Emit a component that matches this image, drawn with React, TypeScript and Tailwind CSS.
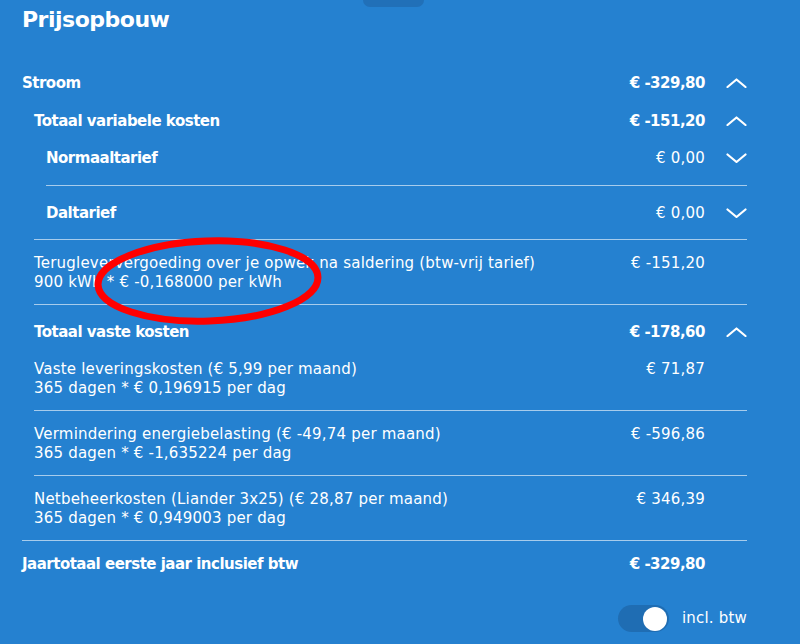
import React from "react"

type Chevron = "up" | "down" | null

function ChevronIcon({ dir }: { dir: Chevron }) {
  if (!dir) return <span className="w-[21px] shrink-0" />
  return (
    <svg width="21" height="10" viewBox="0 0 21 10" className="shrink-0" fill="none" stroke="white" strokeWidth="2.2" strokeLinecap="round" strokeLinejoin="round">
      {dir === "up" ? <polyline points="1.5,9 10.5,1.5 19.5,9" /> : <polyline points="1.5,1.5 10.5,9 19.5,1.5" />}
    </svg>
  )
}

function Amount({ value, chevron, className = "" }: { value: string; chevron: Chevron; className?: string }) {
  return (
    <div className="flex items-center shrink-0">
      <span className={`text-right whitespace-nowrap ${className}`}>{value}</span>
      <span className="ml-[21px] flex items-center">
        <ChevronIcon dir={chevron} />
      </span>
    </div>
  )
}

function Detail({ title, sub, value, last = false }: { title: string; sub: string; value: string; last?: boolean }) {
  return (
    <div className={`flex justify-between items-start pt-[14px] pb-[12px] leading-[19px] ${last ? "" : "border-b border-white/60"}`}>
      <div>
        <div>{title}</div>
        <div>{sub}</div>
      </div>
      <Amount value={value} chevron={null} />
    </div>
  )
}

export default function App() {
  return (
    <div className="relative w-[800px] h-[644px] overflow-hidden bg-[#2581d0] text-white text-[15px] font-['DejaVu_Sans',sans-serif] tracking-[0.2px]">
      <div className="absolute left-[363px] top-0 w-[61px] h-[7px] rounded-b-full bg-[#2170b8]" />

      <div className="pl-[22px] pr-[53px]">
        <h1 className="h-[64px] pt-[6px] text-[22px] leading-[28px] font-bold tracking-[-0.5px]">Prijsopbouw</h1>

        <div className="border-b border-white/60">
          <div className="flex h-[38px] items-center justify-between font-bold tracking-[-0.5px]">
            <span>Stroom</span>
            <Amount value="€ -329,80" chevron="up" />
          </div>

          <div className="pl-[12px]">
            <div className="flex h-[38px] items-center justify-between font-bold tracking-[-0.5px]">
              <span>Totaal variabele kosten</span>
              <Amount value="€ -151,20" chevron="up" />
            </div>

            <div className="pl-[12px] border-b border-white/60">
              <div className="flex justify-between items-center pt-[8px] pb-[17px] leading-[20px] border-b border-white/60">
                <span className="font-semibold tracking-[-0.5px]">Normaaltarief</span>
                <Amount value="€ 0,00" chevron="down" />
              </div>
              <div className="flex justify-between items-center pt-[17px] pb-[16px] leading-[20px]">
                <span className="font-semibold tracking-[-0.5px]">Daltarief</span>
                <Amount value="€ 0,00" chevron="down" />
              </div>
            </div>

            <Detail
              title="Terugleververgoeding over je opwek na saldering (btw-vrij tarief)"
              sub="900 kWh * € -0,168000 per kWh"
              value="€ -151,20"
            />

            <div className="flex justify-between items-center pt-[17px] leading-[20px] font-bold tracking-[-0.5px]">
              <span>Totaal vaste kosten</span>
              <Amount value="€ -178,60" chevron="up" />
            </div>

            <div className="pt-[4px]">
              <Detail title="Vaste leveringskosten (€ 5,99 per maand)" sub="365 dagen * € 0,196915 per dag" value="€ 71,87" />
              <Detail title="Vermindering energiebelasting (€ -49,74 per maand)" sub="365 dagen * € -1,635224 per dag" value="€ -596,86" />
              <Detail title="Netbeheerkosten (Liander 3x25) (€ 28,87 per maand)" sub="365 dagen * € 0,949003 per dag" value="€ 346,39" last />
            </div>
          </div>
        </div>

        <div className="flex justify-between items-center pt-[13px] leading-[20px] font-semibold tracking-[-0.5px]">
          <span>Jaartotaal eerste jaar inclusief btw</span>
          <Amount value="€ -329,80" chevron={null} />
        </div>

        <div className="mt-[31px] flex justify-end items-center gap-[13px]">
          <div className="w-[51px] h-[27px] rounded-full bg-[#1f6db3] flex items-center justify-end pr-[2px]">
            <div className="w-[24px] h-[24px] rounded-full bg-white" />
          </div>
          <span>incl. btw</span>
        </div>
      </div>

      <svg className="absolute left-0 top-0 pointer-events-none" width="800" height="644">
        <ellipse cx="208" cy="281" rx="110" ry="40" fill="none" stroke="#ff0000" strokeWidth="7" transform="rotate(-2 208 281)" />
      </svg>
    </div>
  )
}
